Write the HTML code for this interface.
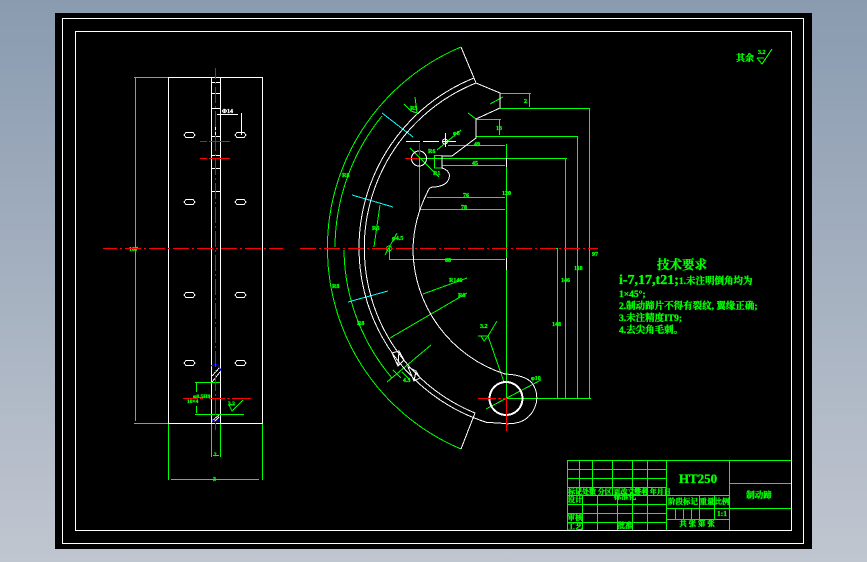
<!DOCTYPE html>
<html><head><meta charset="utf-8"><style>
html,body{margin:0;padding:0;width:867px;height:562px;overflow:hidden;background:linear-gradient(#8a9bb0,#c0c6d0)}
svg{position:absolute;left:0;top:0}
text{font-family:"Liberation Serif","Noto Serif CJK SC",serif;fill:#0f0;font-weight:bold;stroke:#0f0;stroke-width:.35}
.s{font-size:7.5px;text-anchor:middle}
.w{stroke:#fff;fill:none}.g{stroke:#0f0;fill:none}.r{stroke:#f00;fill:none}.c{stroke:#0ff;fill:none}
</style></head><body>
<svg width="867" height="562" viewBox="0 0 867 562" shape-rendering="crispEdges">
<rect x="55" y="13" width="757" height="536" fill="#000"/>
<rect x="62.5" y="18.5" width="741" height="525" class="w"/>
<rect x="75.5" y="31.5" width="716" height="499" class="w"/>

<!-- left view -->
<g class="w">
<rect x="168.5" y="77.5" width="94" height="346"/>
<path d="M211.5 77V423M220.5 77V423M212 82.5H220M212 93.5H220M212 108.5H220M212 136.5H220M212 155.5H220M212 168.5H220M212 191.5H220M212 382.5H220M212 414.5H220"/>
<path d="M215.500 113V136M217 114.500H238M241.500 113V135"/>
<path d="M186 132.500h7l2 2.500-2 2.500h-7l-2-2.500zM237 132.500h7l2 2.500-2 2.500h-7l-2-2.500zM186 199.500h7l2 2.500-2 2.500h-7l-2-2.500zM237 199.500h7l2 2.500-2 2.500h-7l-2-2.500zM186 292.500h7l2 2.500-2 2.500h-7l-2-2.500zM237 292.500h7l2 2.500-2 2.500h-7l-2-2.500zM186 360.500h7l2 2.500-2 2.500h-7l-2-2.500zM237 360.500h7l2 2.500-2 2.500h-7l-2-2.500z"/>
<path d="M212 376l8-9M212 382l8-10M212 421l7-6M214 422l5-5"/>
</g>
<path d="M211 366q5-3 8 0l2 5M212 420q4 3 7 0" stroke="#00f" fill="none"/>
<g class="g">
<path d="M134 77.500H168M135.500 77V421M134 423.500H168M168.500 424V480M262.500 424V480M171 479.500H259M211.500 424V457M220.500 424V457M213 455.500H219"/>
<path d="M195 382.500H220M195 414.500H244M196.500 383V392M196.500 406V413"/>
<path d="M229 405l3 6 11-11M228 405h7"/>
</g>
<text x="193" y="398" style="font-size:5.500px">φ8.5H9</text>
<text x="187" y="403" style="font-size:5.500px">10×4</text>
<text x="228" y="405" style="font-size:5.500px">3.2</text>
<text x="213" y="481" style="font-size:6px">3</text>
<text x="214" y="456" style="font-size:5px">2</text>
<text x="222" y="113" style="font-size:6px;fill:#fff;stroke:#fff">Φ14</text>
<text x="129" y="251" style="font-size:6px">107</text>
<path d="M103 248.500H283" class="r" stroke-dasharray="16 3 2 3" stroke-dashoffset="2"/>
<path d="M215.500 68V430" class="r" stroke-dasharray="16 3 2 3" stroke-dashoffset="5"/>
<path d="M200 141.500H207M209 141.500H230M200 158.500H207M209 158.500H230M183 398.500H198M200 398.500H203M209 398.500H225M227 398.500H230M232 398.500H251" class="r"/>

<!-- main view -->
<g class="g">
<path d="M461 47A218 218 0 0 0 461 449"/>
<path d="M382 116A210 210 0 0 0 335 247"/>
<path d="M344 250A201 201 0 0 0 392 378"/>
<path d="M500 93.500H531M529.500 94V107M500 108.500H590M589.500 109V398"/>
<path d="M476 119.500H501M499.500 120V135M476 136.500H578M577.500 137V398"/>
<path d="M448 145.500H505M506.500 144V398M419 158.500H567M565.500 159V398M442 165.500H505M427 197.500H505M420 209.500H505"/>
<path d="M419.500 158V212M434.500 155V168H442M434 155.500H442"/>
<path d="M390 259.500H505M389.500 248V260M544 248.500H558M557.500 249V398M506 398.500H591"/>
<path d="M486 409L541 380M488 336L504 382M423 294L467 278M390 338L467 293M387 382L431 345"/>
<path d="M374 247L380 205M415 97L417 113l-6-2-7-7M410 148L439 177M437 150L461 130M385 255L397 233"/>
<circle cx="389" cy="248.500" r="2.500"/>
<path d="M478 336h10l-4 5-3-5M488 336l9-15M393 370l8 8M402 372l8 8"/>
<path d="M476 119l-8-6M490 104l13-7"/>
</g>
<g class="c">
<path d="M382 113L413 137M352 195L393 207M348 302L388 291"/>
</g>
<g class="w">
<path d="M461 47L474 78L476 83L500 93V108L476 119V138L452 156H442V168Q449 170 449.500 176Q449 182 443 185Q438 187 433 187Q429 187 427 193A132 132 0 0 0 413 248A132 132 0 0 0 505 374Q525 375 532 383Q538 391 536.500 402Q533 417 520 422Q510 425 500 423L487 422.500A183 183 0 0 1 359 248A183 183 0 0 1 474 78"/>
<path d="M476 83A178 178 0 0 0 475 413L461 449"/>
<circle cx="506" cy="398.500" r="16.500" stroke-width="2"/>
<circle cx="419" cy="158.500" r="7.500"/>
<circle cx="445" cy="141.500" r="2.500"/>
<path d="M406 141.500H420M423 141.500H439M442 141.500H456M445.500 133V147M506.500 158V167M506.500 258V270"/>
<path d="M392 353L399 351L404 360L398 366ZM399 351L398 366M408 367L416 371L420 378L414 381ZM416 371L414 381"/>
</g>
<path d="M300 248.500H598" class="r" stroke-dasharray="16 3 2 3"/>
<path d="M405 158.500H419M419.500 143V155M478 398.500H496M498 398.500H501M503 398.500H506M506.500 398V431" class="r"/>

<g style="font-size:6px">
<text x="474" y="146">49</text><text x="472" y="165">45</text><text x="463" y="197">76</text><text x="461" y="209">78</text><text x="445" y="262">68</text>
<text x="502" y="195">120</text>
<text x="524" y="103">2</text><text x="496" y="130">13</text>
<text x="592" y="256">97</text><text x="574" y="270">118</text><text x="561" y="282">146</text><text x="552" y="326">148</text>
<text x="449" y="282">R146</text><text x="458" y="297">R6</text>
<text x="332" y="288">R8</text><text x="357" y="325">R8</text><text x="342" y="177">R8</text>
<text x="410" y="110">R5</text>
<text x="372" y="230">R5</text><text x="392" y="240">φ4.5</text>
<text x="453" y="135">φ8</text><text x="428" y="153">R6</text>
<text x="433" y="175">R1</text><text x="403" y="382">4.5</text>
<text x="531" y="380">φ10</text><text x="480" y="328">3.2</text>
</g>

<!-- roughness -->
<text x="736" y="61" style="font-size:9px">其余</text>
<text x="758" y="54" style="font-size:6px">3.2</text>
<path d="M757 58l5 6 10-15M757 58h7" class="g"/>

<!-- notes -->
<text x="657" y="269" style="font-size:12.500px">技术要求</text>
<text x="619" y="284" style="font-size:14px">i-7,17,t21;<tspan style="font-size:9.500px">1.未注明倒角均为</tspan></text>
<text x="619" y="297" style="font-size:9.500px">1×45°;</text>
<text x="619" y="309" style="font-size:9.500px">2.制动蹄片不得有裂纹, 翼缘正确;</text>
<text x="619" y="321" style="font-size:9.500px">3.未注精度IT9;</text>
<text x="619" y="333" style="font-size:9.500px">4.去尖角毛刺。</text>

<!-- title block -->
<path class="g" d="M567 460.500H791M567 469.500H666M567 478.500H666M567 487.500H666M567 495.500H729M567 504.500H666M567 513.500H666M567 522.500H666M666 508.500H791M729 483.500H791M666 519.500H729
M567.500 460V530M579.500 461V495M592.500 461V495M612.500 461V495M632.500 461V530M647.500 461V530M666.500 460V530M729.500 460V530
M582.500 495V530M597.500 495V530M617.500 495V530M699.500 495V519M714.500 495V519M675.500 508V519M683.500 508V519M691.500 508V519"/>
<text x="698" y="483" style="font-size:13px;text-anchor:middle">HT250</text>
<text x="759" y="498" class="s" style="font-size:8.500px">制动蹄</text>
<text x="683" y="504" class="s">阶段标记</text>
<text x="707" y="504" class="s">重量</text>
<text x="722" y="504" class="s">比例</text>
<text x="722" y="516" class="s">1:1</text>
<text x="697" y="526" class="s">共 张 第 张</text>
<text x="568" y="494" style="font-size:7px">标记处数 分区 更改文件号</text>
<text x="634" y="494" style="font-size:7px">签名 年月日</text>
<text x="575" y="502" class="s">设计</text>
<text x="625" y="499" class="s">标准化</text>
<text x="575" y="520" class="s">审核</text>
<text x="575" y="529" class="s">工艺</text>
<text x="625" y="528" class="s">批准</text>
</svg>
</body></html>
